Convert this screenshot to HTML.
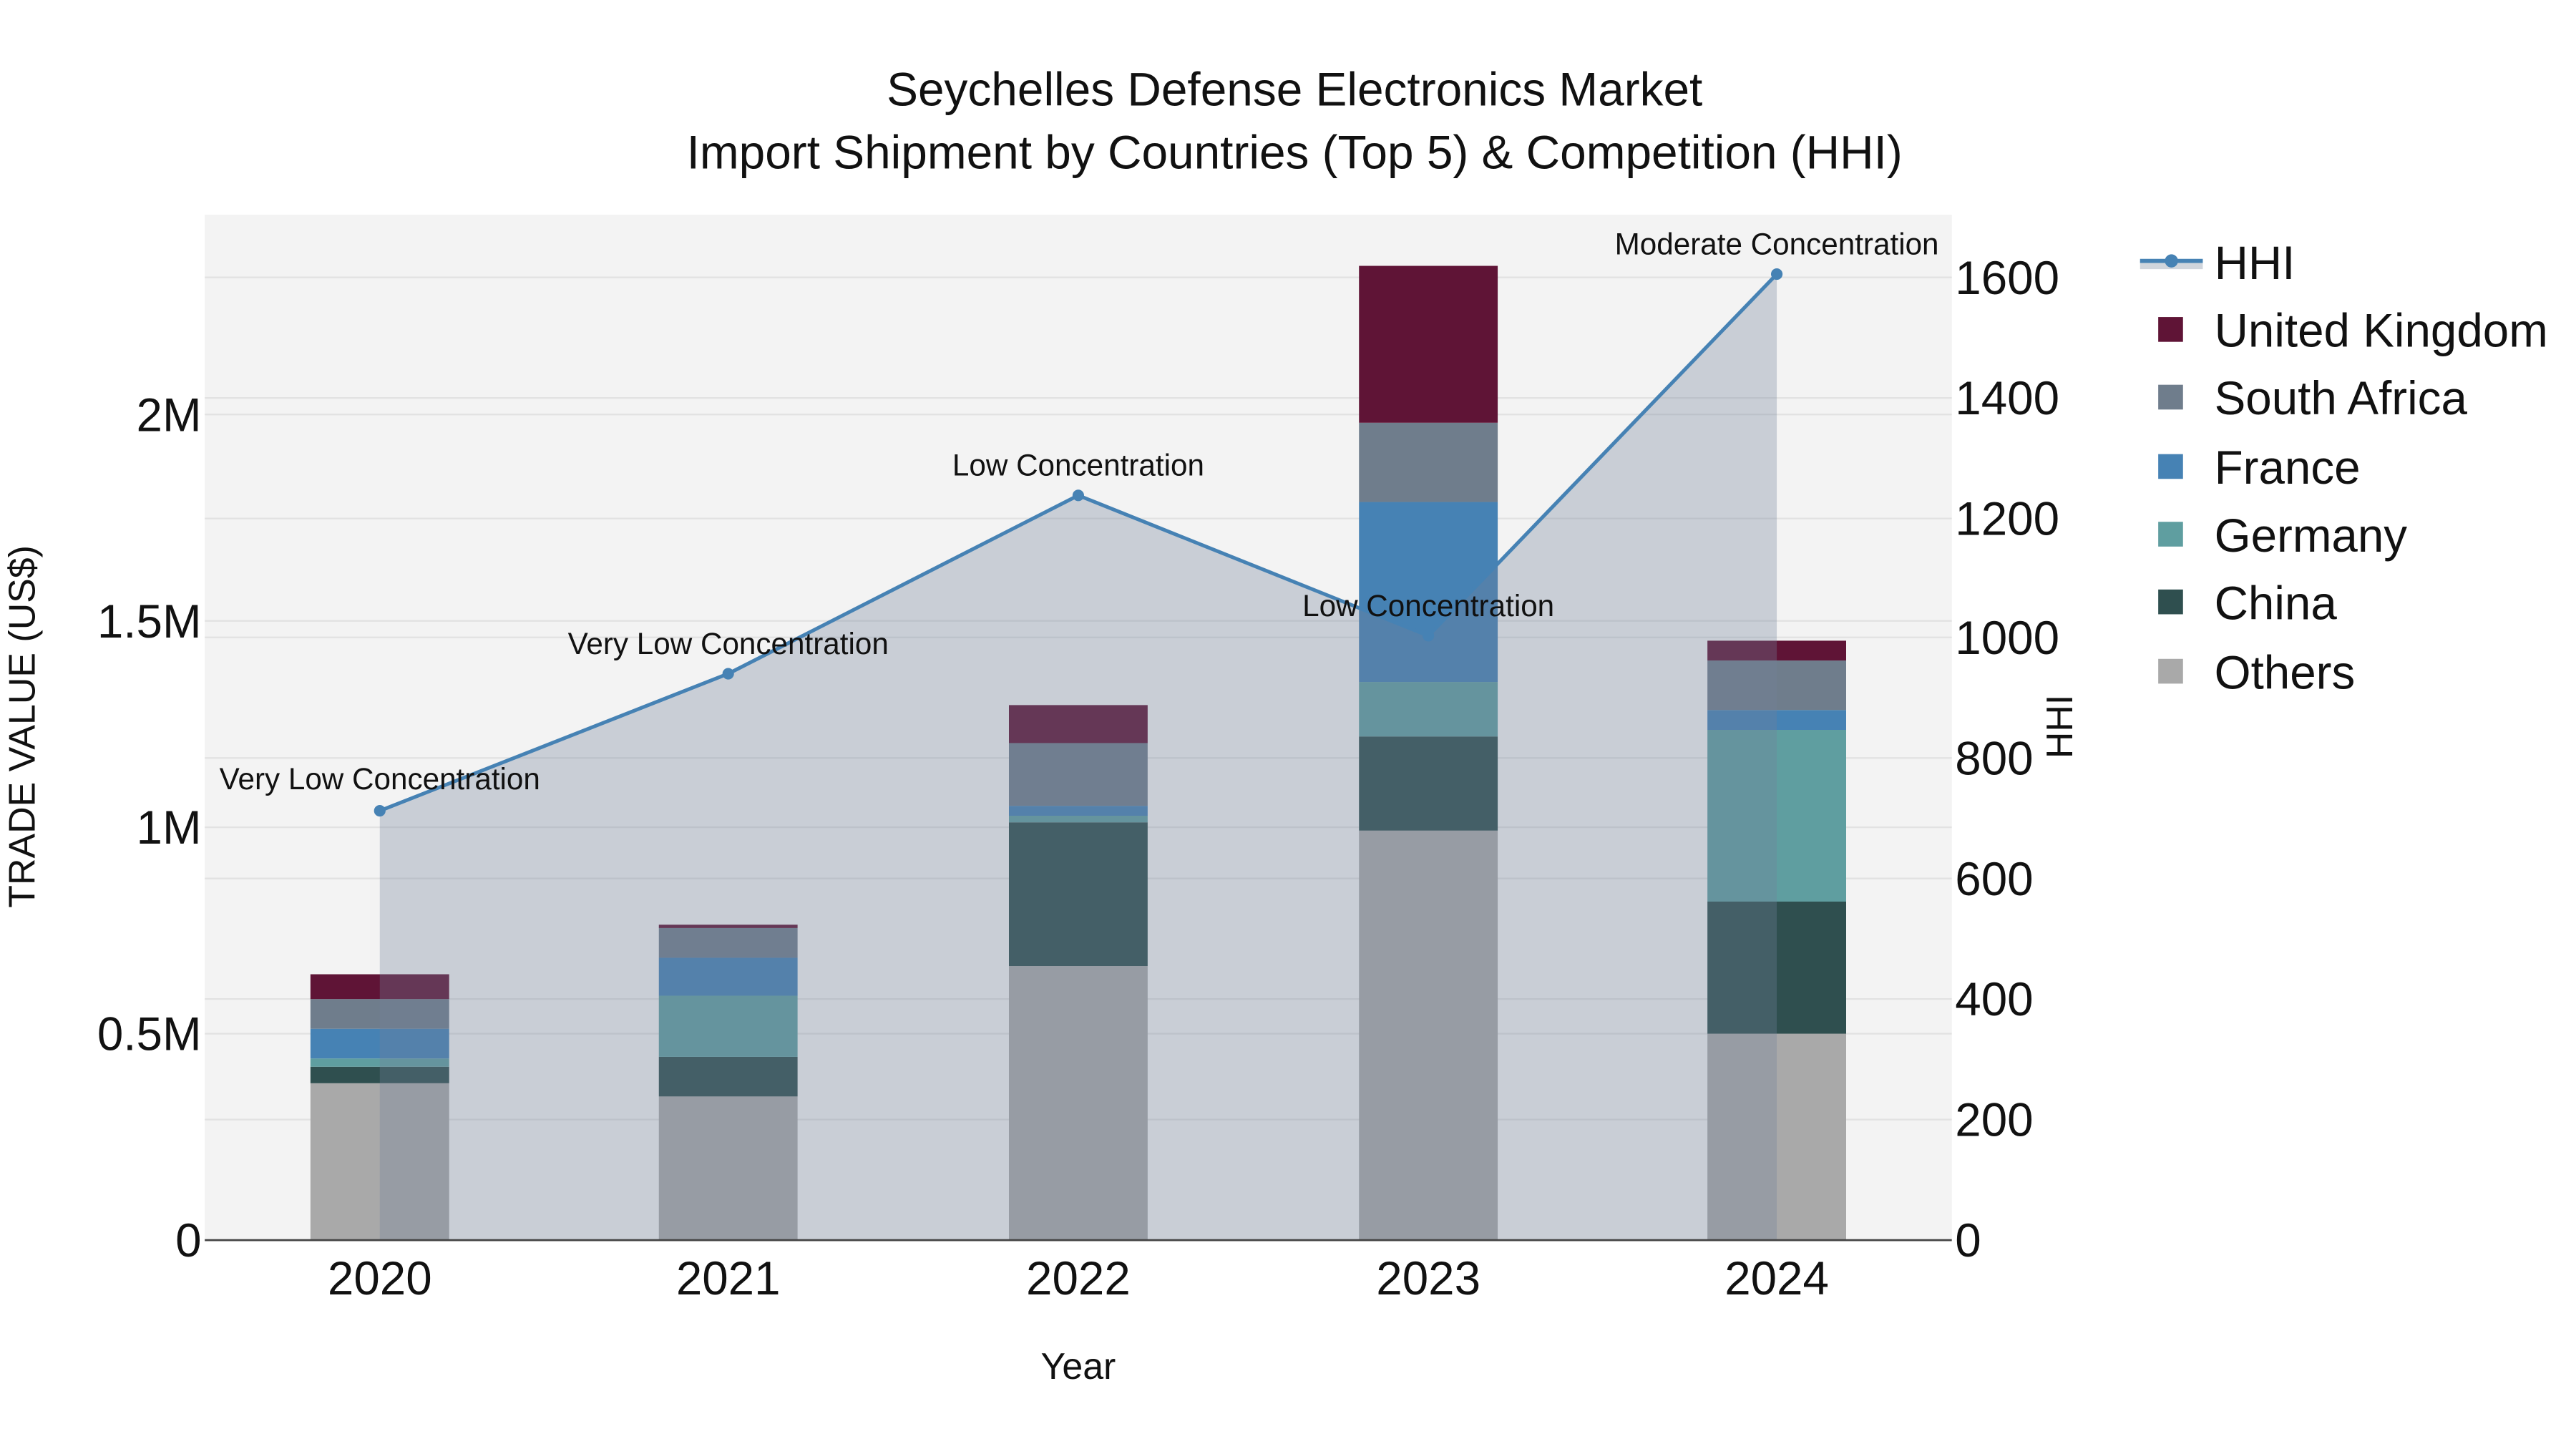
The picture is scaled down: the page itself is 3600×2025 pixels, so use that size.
<!DOCTYPE html>
<html><head><meta charset="utf-8"><style>html,body{margin:0;padding:0;background:#fff}svg{display:block}text{font-family:"Liberation Sans",sans-serif;fill:#111}</style></head>
<body>
<svg width="3600" height="2025" viewBox="0 0 1560 877.5" xmlns="http://www.w3.org/2000/svg">
<rect width="1560" height="877.5" fill="#fff"/>
<rect x="124" y="130" width="1058" height="621" fill="#f3f3f3"/>
<g stroke="#e2e2e2" stroke-width="1">
<line x1="124" x2="1182" y1="626" y2="626"/><line x1="124" x2="1182" y1="501" y2="501"/><line x1="124" x2="1182" y1="376" y2="376"/><line x1="124" x2="1182" y1="251" y2="251"/>
<line x1="124" x2="1182" y1="678" y2="678"/><line x1="124" x2="1182" y1="605" y2="605"/><line x1="124" x2="1182" y1="532" y2="532"/><line x1="124" x2="1182" y1="459" y2="459"/><line x1="124" x2="1182" y1="386" y2="386"/><line x1="124" x2="1182" y1="314" y2="314"/><line x1="124" x2="1182" y1="241" y2="241"/><line x1="124" x2="1182" y1="168" y2="168"/>
</g>
<g>
<rect x="188" y="656" width="84" height="95" fill="#a9a9a9"/><rect x="188" y="646" width="84" height="10" fill="#2f4f4f"/><rect x="188" y="641" width="84" height="5" fill="#5f9ea0"/><rect x="188" y="623" width="84" height="18" fill="#4682b4"/><rect x="188" y="605" width="84" height="18" fill="#6f7d8c"/><rect x="188" y="590" width="84" height="15" fill="#5f1436"/>
<rect x="399" y="664" width="84" height="87" fill="#a9a9a9"/><rect x="399" y="640" width="84" height="24" fill="#2f4f4f"/><rect x="399" y="603" width="84" height="37" fill="#5f9ea0"/><rect x="399" y="580" width="84" height="23" fill="#4682b4"/><rect x="399" y="562" width="84" height="18" fill="#6f7d8c"/><rect x="399" y="560" width="84" height="2" fill="#5f1436"/>
<rect x="611" y="585" width="84" height="166" fill="#a9a9a9"/><rect x="611" y="498" width="84" height="87" fill="#2f4f4f"/><rect x="611" y="494" width="84" height="4" fill="#5f9ea0"/><rect x="611" y="488" width="84" height="6" fill="#4682b4"/><rect x="611" y="450" width="84" height="38" fill="#6f7d8c"/><rect x="611" y="427" width="84" height="23" fill="#5f1436"/>
<rect x="823" y="503" width="84" height="248" fill="#a9a9a9"/><rect x="823" y="446" width="84" height="57" fill="#2f4f4f"/><rect x="823" y="413" width="84" height="33" fill="#5f9ea0"/><rect x="823" y="304" width="84" height="109" fill="#4682b4"/><rect x="823" y="256" width="84" height="48" fill="#6f7d8c"/><rect x="823" y="161" width="84" height="95" fill="#5f1436"/>
<rect x="1034" y="626" width="84" height="125" fill="#a9a9a9"/><rect x="1034" y="546" width="84" height="80" fill="#2f4f4f"/><rect x="1034" y="442" width="84" height="104" fill="#5f9ea0"/><rect x="1034" y="430" width="84" height="12" fill="#4682b4"/><rect x="1034" y="400" width="84" height="30" fill="#6f7d8c"/><rect x="1034" y="388" width="84" height="12" fill="#5f1436"/>
</g>
<polygon points="230,751 230,491 441,408 653,300 865,385 1076,166 1076,751" fill="rgba(114,129,154,0.324)"/>
<polyline points="230,491 441,408 653,300 865,385 1076,166" fill="none" stroke="#4682b4" stroke-width="2.2"/>
<g fill="#4682b4"><circle cx="230" cy="491" r="3.5"/><circle cx="441" cy="408" r="3.5"/><circle cx="653" cy="300" r="3.5"/><circle cx="865" cy="385" r="3.5"/><circle cx="1076" cy="166" r="3.5"/></g>
<line x1="124" x2="1182" y1="751" y2="751" stroke="#444" stroke-width="1.2"/>
<g font-size="18.3" text-anchor="middle">
<text x="230" y="478">Very Low Concentration</text><text x="441" y="396">Very Low Concentration</text><text x="653" y="288">Low Concentration</text><text x="865" y="373">Low Concentration</text><text x="1076" y="154">Moderate Concentration</text>
</g>
<g font-size="28.4" text-anchor="end">
<text x="122" y="761">0</text><text x="122" y="636">0.5M</text><text x="122" y="511">1M</text><text x="122" y="386">1.5M</text><text x="122" y="261">2M</text>
</g>
<g font-size="28.4" text-anchor="start">
<text x="1184" y="761">0</text><text x="1184" y="688">200</text><text x="1184" y="615">400</text><text x="1184" y="542">600</text><text x="1184" y="469">800</text><text x="1184" y="396">1000</text><text x="1184" y="324">1200</text><text x="1184" y="251">1400</text><text x="1184" y="178">1600</text>
</g>
<g font-size="28.4" text-anchor="middle">
<text x="230" y="784">2020</text><text x="441" y="784">2021</text><text x="653" y="784">2022</text><text x="865" y="784">2023</text><text x="1076" y="784">2024</text>
</g>
<text x="653" y="835" font-size="22.5" text-anchor="middle">Year</text>
<text transform="translate(21,440) rotate(-90)" font-size="22.5" text-anchor="middle">TRADE VALUE (US$)</text>
<text transform="translate(1255,440) rotate(-90)" font-size="22.5" text-anchor="middle">HHI</text>
<g font-size="28.5" text-anchor="middle">
<text x="784" y="64">Seychelles Defense Electronics Market</text>
<text x="784" y="102">Import Shipment by Countries (Top 5) &amp; Competition (HHI)</text>
</g>
<rect x="1296" y="158" width="38" height="5" fill="#d0d5dc"/>
<line x1="1296" x2="1334" y1="158" y2="158" stroke="#4682b4" stroke-width="2.5"/>
<circle cx="1315" cy="158" r="4" fill="#4682b4"/>
<g>
<rect x="1307" y="192" width="15" height="15" fill="#5f1436"/>
<rect x="1307" y="233" width="15" height="15" fill="#6f7d8c"/>
<rect x="1307" y="275" width="15" height="15" fill="#4682b4"/>
<rect x="1307" y="316" width="15" height="15" fill="#5f9ea0"/>
<rect x="1307" y="357" width="15" height="15" fill="#2f4f4f"/>
<rect x="1307" y="399" width="15" height="15" fill="#a9a9a9"/>
</g>
<g font-size="28.4">
<text x="1341" y="169">HHI</text>
<text x="1341" y="210">United Kingdom</text>
<text x="1341" y="251">South Africa</text>
<text x="1341" y="293">France</text>
<text x="1341" y="334">Germany</text>
<text x="1341" y="375">China</text>
<text x="1341" y="417">Others</text>
</g>
</svg>
</body></html>
